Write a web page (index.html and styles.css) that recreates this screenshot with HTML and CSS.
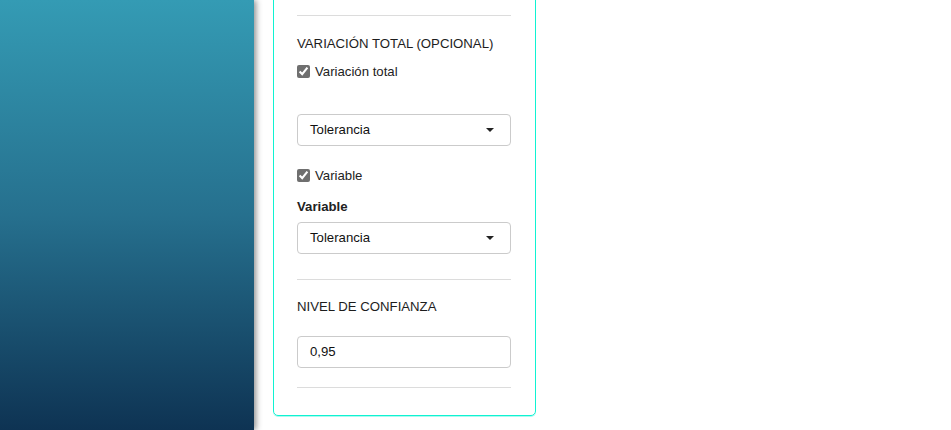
FILE: index.html
```html
<!DOCTYPE html>
<html lang="es">
<head>
<meta charset="utf-8">
<title>Variación</title>
<link rel="stylesheet" href="styles.css">
</head>
<body>
<div class="layout">
  <aside class="sidebar"></aside>
  <main class="main">
    <section class="panel">
      <div class="sep sep-first"></div>
      <h3 class="section-title t1">VARIACIÓN TOTAL (OPCIONAL)</h3>
      <label class="check c1"><input type="checkbox" checked><span>Variación total</span></label>
      <div class="select s1"><span>Tolerancia</span><span class="caret"></span></div>
      <label class="check c2"><input type="checkbox" checked><span>Variable</span></label>
      <div class="field-label">Variable</div>
      <div class="select s2"><span>Tolerancia</span><span class="caret"></span></div>
      <div class="sep sep-2"></div>
      <h3 class="section-title t2">NIVEL DE CONFIANZA</h3>
      <div class="input">0,95</div>
      <div class="sep sep-3"></div>
    </section>
  </main>
</div>
</body>
</html>
```
FILE: styles.css
```css
* { box-sizing: border-box; }
html, body { margin: 0; padding: 0; height: 100%; background: #fff; overflow: hidden; }
body { font-family: "Liberation Sans", Arial, sans-serif; font-size: 13.2px; color: #222; }
.layout { display: flex; height: 430px; }
.sidebar {
  width: 254px; flex: none; height: 100%;
  background: linear-gradient(to bottom, #349bb4 0%, #26708e 50%, #0e3353 100%);
  box-shadow: 2px 0 6px rgba(0,0,0,0.45);
  position: relative; z-index: 1;
}
.main { flex: 1; padding-left: 19px; }
.panel {
  width: 263px;
  margin-top: -40px;
  padding: 40px 24px 27px 23px;
  border: 1px solid #10f2d2;
  border-radius: 0 0 5px 5px;
  box-shadow: 0 1px 0 rgba(16, 242, 210, 0.35);
  display: flex; flex-direction: column;
}
.sep { height: 1px; background: #dcdcdc; flex: none; }
.sep-first { margin-top: 14px; }
.section-title { margin: 0; font-size: 13.2px; font-weight: normal; line-height: 16px; color: #1d1d1d; }
.t1 { margin-top: 20px; }
.t2 { margin-top: 19px; }
.check { display: flex; align-items: center; gap: 5px; line-height: 16px; height: 16px; }
.check span { position: relative; top: 1px; }
.check input { margin: 0; width: 13px; height: 13px; accent-color: #6f6f6f; }
.c1 { margin-top: 11px; }
.c2 { margin-top: 21px; }
.select, .input {
  height: 32px; border: 1px solid #cbcbcb; border-radius: 4px;
  display: flex; align-items: center; justify-content: space-between;
  padding: 0 16px 1px 12px; color: #111;
}
.s1 { margin-top: 35px; }
.s2 { margin-top: 7px; }
.caret { width: 0; height: 0; border-left: 4px solid transparent; border-right: 4px solid transparent; border-top: 4px solid #222; }
.field-label { margin-top: 16px; font-weight: bold; line-height: 16px; }
.sep-2 { margin-top: 25px; }
.input { margin-top: 21px; }
.sep-3 { margin-top: 19px; }
```
